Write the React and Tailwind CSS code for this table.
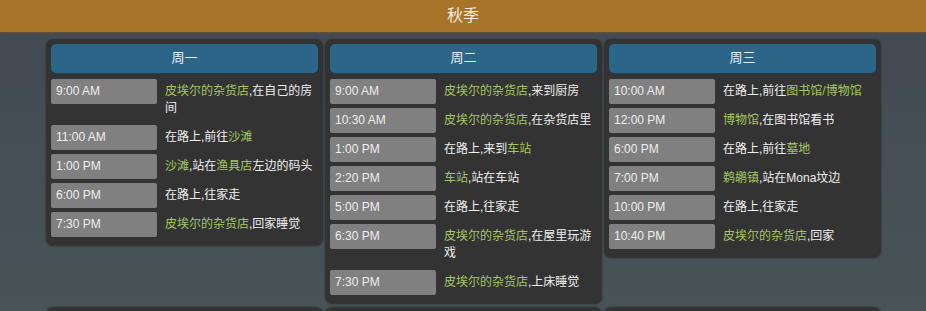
import React from "react";

const G = ({ children }) => <span className="text-[#a3c862]">{children}</span>;

const days = [
  {
    name: "周一",
    rows: [
      ["9:00 AM", <><G>皮埃尔的杂货店</G>,在自己的房间</>],
      ["11:00 AM", <>在路上,前往<G>沙滩</G></>],
      ["1:00 PM", <><G>沙滩</G>,站在<G>渔具店</G>左边的码头</>],
      ["6:00 PM", <>在路上,往家走</>],
      ["7:30 PM", <><G>皮埃尔的杂货店</G>,回家睡觉</>],
    ],
  },
  {
    name: "周二",
    rows: [
      ["9:00 AM", <><G>皮埃尔的杂货店</G>,来到厨房</>],
      ["10:30 AM", <><G>皮埃尔的杂货店</G>,在杂货店里</>],
      ["1:00 PM", <>在路上,来到<G>车站</G></>],
      ["2:20 PM", <><G>车站</G>,站在车站</>],
      ["5:00 PM", <>在路上,往家走</>],
      ["6:30 PM", <><G>皮埃尔的杂货店</G>,在屋里玩游戏</>],
      ["7:30 PM", <><G>皮埃尔的杂货店</G>,上床睡觉</>],
    ],
  },
  {
    name: "周三",
    rows: [
      ["10:00 AM", <>在路上,前往<G>图书馆/博物馆</G></>],
      ["12:00 PM", <><G>博物馆</G>,在图书馆看书</>],
      ["6:00 PM", <>在路上,前往<G>墓地</G></>],
      ["7:00 PM", <><G>鹈鹕镇</G>,站在Mona坟边</>],
      ["10:00 PM", <>在路上,往家走</>],
      ["10:40 PM", <><G>皮埃尔的杂货店</G>,回家</>],
    ],
  },
  {
    name: "周四",
    rows: [
      ["9:00 AM", <><G>皮埃尔的杂货店</G>,来到厨房</>],
      ["7:30 PM", <><G>皮埃尔的杂货店</G>,回家睡觉</>],
    ],
  },
  {
    name: "周五",
    rows: [
      ["9:00 AM", <><G>皮埃尔的杂货店</G>,来到厨房</>],
      ["7:30 PM", <><G>皮埃尔的杂货店</G>,回家睡觉</>],
    ],
  },
  {
    name: "周六",
    rows: [
      ["9:00 AM", <><G>皮埃尔的杂货店</G>,来到厨房</>],
      ["7:30 PM", <><G>皮埃尔的杂货店</G>,回家睡觉</>],
    ],
  },
];

const Day = ({ day }) => (
  <div className="self-start rounded-[6px] bg-[#333333] px-[4px] pt-[4px] pb-[8px] shadow-[0_0_2px_1px_#2c2c2c]">
    <div className="h-[29px] rounded-[5px] bg-[#2b6588] text-center text-[13px] leading-[28px] text-[#e8eef2] shadow-[0_1px_1px_#1f3f55]">
      {day.name}
    </div>
    <div className="mt-[6px] flex flex-col gap-[4px]">
      {day.rows.map(([t, d], i) => (
        <div key={i} className="flex items-start">
          <div className="h-[25px] w-[106px] shrink-0 rounded-[2px] bg-[#808080] pl-[5px] text-[12px] leading-[25px] text-[#eeeeee]">
            {t}
          </div>
          <div className="ml-[8px] w-[153px] py-[4px] text-[12px] leading-[17px] text-[#eeeeee]">
            {d}
          </div>
        </div>
      ))}
    </div>
  </div>
);

export default function App() {
  return (
    <div className="min-h-[311px] bg-gradient-to-b from-[#424a54] to-[#4a5757] font-['Liberation_Sans','Noto_Sans_CJK_SC',sans-serif]">
      <div className="h-[32px] bg-[#a8742a] text-center text-[16px] leading-[31px] text-[#f3ece0] shadow-[0_1px_2px_#6b5030]">
        秋季
      </div>
      <div className="ml-[47px] mt-[8px] grid w-[833px] grid-cols-3 gap-x-[4px] gap-y-[5px]">
        {days.map((d) => (
          <Day key={d.name} day={d} />
        ))}
      </div>
    </div>
  );
}
